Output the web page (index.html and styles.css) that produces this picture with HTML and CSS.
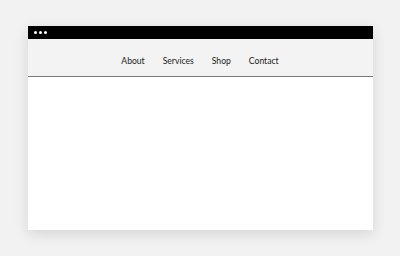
FILE: index.html
```html
<!DOCTYPE html>
<html lang="en">
<head>
    <meta charset="UTF-8">
    <meta name="viewport" content="width=device-width, initial-scale=1.0">
    <title>Nav mockup</title>
    <link rel="stylesheet" href="styles.css">
</head>
<body>
    <div class="window">
        <div class="titlebar">
            <span class="dot"></span>
            <span class="dot"></span>
            <span class="dot"></span>
        </div>
        <nav class="nav">
            <a href="#">About</a>
            <a href="#">Services</a>
            <a href="#">Shop</a>
            <a href="#">Contact</a>
        </nav>
        <div class="content"></div>
    </div>
</body>
</html>
```

FILE: styles.css
```css
body {
    margin: 0;
    height: 256px;
    display: flex;
    justify-content: center;
    align-items: center;
    background: #f2f2f2;
    font-family: Lato, sans-serif;
}

.window {
    width: 345px;
    height: 204px;
    display: flex;
    flex-direction: column;
    background: #fff;
    box-shadow: 0 4px 14px rgba(0,0,0,0.12);
}

.titlebar {
    height: 13px;
    background: #000;
    display: flex;
    align-items: center;
    gap: 2px;
    padding-left: 6px;
}

.dot {
    width: 3px;
    height: 3px;
    border-radius: 50%;
    background: #fff;
}

.nav {
    height: 31px;
    padding-top: 6px;
    background: #f3f3f3;
    border-bottom: 1px solid #777;
    display: flex;
    justify-content: center;
    align-items: center;
    gap: 18px;
}

.nav a {
    color: #1a1a1a;
    text-decoration: none;
    font-size: 8.6px;
}

.content {
    flex: 1;
}
```
